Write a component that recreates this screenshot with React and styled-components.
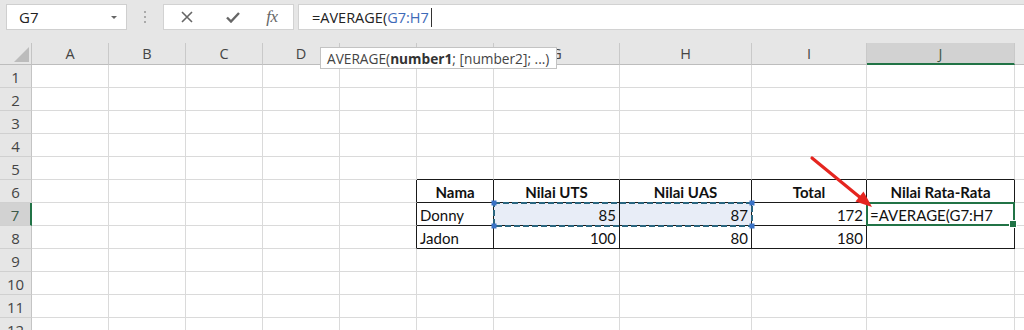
import styled, { createGlobalStyle } from "styled-components"

const GlobalStyle = createGlobalStyle`
  html, body {
    margin: 0;
    padding: 0;
    background: #ffffff;
    overflow: hidden;
  }
  * { box-sizing: border-box; }
`

const UI_FONT = `"Open Sans", "Noto Sans", sans-serif`
const CELL_FONT = `Lato, "Liberation Sans", sans-serif`

const LETTERS = ["A", "B", "C", "D", "E", "F", "G", "H", "I", "J", "K"]
const WIDTHS = [77, 77, 77, 77, 77, 77, 126, 132, 115, 148, 70]
const ROWS = [1, 2, 3, 4, 5, 6, 7, 8, 9, 10, 11, 12]

const DATA = {
  6: {
    5: { t: "Nama", a: "center", b: true },
    6: { t: "Nilai UTS", a: "center", b: true },
    7: { t: "Nilai UAS", a: "center", b: true },
    8: { t: "Total", a: "center", b: true },
    9: { t: "Nilai Rata-Rata", a: "center", b: true },
  },
  7: {
    5: { t: "Donny", a: "flex-start" },
    6: { t: "85", a: "flex-end" },
    7: { t: "87", a: "flex-end" },
    8: { t: "172", a: "flex-end" },
    9: { t: "=AVERAGE(G7:H7", a: "flex-start" },
  },
  8: {
    5: { t: "Jadon", a: "flex-start" },
    6: { t: "100", a: "flex-end" },
    7: { t: "80", a: "flex-end" },
    8: { t: "180", a: "flex-end" },
  },
}

const Page = styled.div`
  position: relative;
  width: 1024px;
  height: 330px;
  overflow: hidden;
  background: #e6e6e6;
`

const FormulaBar = styled.div`
  display: flex;
  align-items: flex-start;
  height: 43px;
  padding: 4px 0 0 6px;
`

const NameBox = styled.div`
  display: flex;
  align-items: center;
  justify-content: space-between;
  flex: none;
  width: 121px;
  height: 26px;
  padding: 0 9px 0 12px;
  background: #fff;
  border: 1px solid #cfcfcf;
  font-family: ${UI_FONT};
  font-size: 15px;
  color: #222;
`

const Caret = styled.span`
  width: 0;
  height: 0;
  border-left: 3px solid transparent;
  border-right: 3px solid transparent;
  border-top: 3px solid #666;
`

const Grip = styled.div`
  display: flex;
  flex-direction: column;
  align-items: center;
  justify-content: center;
  flex: none;
  gap: 3px;
  width: 36px;
  height: 26px;
`

const GripDot = styled.span`
  width: 2px;
  height: 2px;
  background: #aaa;
`

const EditBox = styled.div`
  display: flex;
  align-items: center;
  flex: none;
  width: 131px;
  height: 26px;
  background: #fff;
  border: 1px solid #d2d2d2;
  padding-left: 16px;
`

const IconSlot = styled.span`
  display: flex;
  align-items: center;
  justify-content: center;
  width: ${(p) => p.$w}px;
  margin-left: ${(p) => p.$gap || 0}px;
`

const Fx = styled.span`
  font-family: "Liberation Serif", "DejaVu Serif", serif;
  font-style: italic;
  font-size: 17px;
  color: #666;
  letter-spacing: -0.5px;
`

const FormulaInput = styled.div`
  display: flex;
  align-items: center;
  flex: 1;
  height: 26px;
  margin-left: 4px;
  padding-left: 13px;
  background: #fff;
  border: 1px solid #d2d2d2;
  border-right: none;
  font-family: ${UI_FONT};
  font-size: 14.5px;
  color: #222;
`

const Ref = styled.span`
  color: #3e6ab8;
`

const Cursor = styled.span`
  display: inline-block;
  width: 1px;
  height: 19px;
  margin-left: 2px;
  background: #333;
`

const Sheet = styled.div`
  position: relative;
  background: #fff;
`

const Row = styled.div`
  display: flex;
`

const Corner = styled.div`
  position: relative;
  flex: none;
  width: 32px;
  height: 22px;
  background: #e6e6e6;
  border-right: 1px solid #c4c4c4;
  border-bottom: 1px solid #bdbdbd;

  &::after {
    content: "";
    position: absolute;
    right: 2px;
    bottom: 2px;
    width: 15px;
    height: 15px;
    background: #bcbcbc;
    clip-path: polygon(100% 0, 100% 100%, 0 100%);
  }
`

const ColHeader = styled.div`
  display: flex;
  align-items: center;
  justify-content: center;
  flex: none;
  width: ${(p) => p.$w}px;
  height: 22px;
  background: ${(p) => (p.$active ? "#d2d2d2" : "#e6e6e6")};
  border-right: 1px solid #c9c9c9;
  border-bottom: ${(p) => (p.$active ? "2px solid #217346" : "1px solid #bdbdbd")};
  font-family: ${UI_FONT};
  font-size: 14.5px;
  color: ${(p) => (p.$active ? "#3d5a48" : "#444")};
`

const RowHeader = styled.div`
  display: flex;
  align-items: center;
  justify-content: center;
  flex: none;
  width: 32px;
  height: 23px;
  padding-top: 1px;
  background: ${(p) => (p.$active ? "#d2d2d2" : "#e6e6e6")};
  border-right: ${(p) => (p.$active ? "2px solid #217346" : "1px solid #c4c4c4")};
  border-bottom: 1px solid #d0d0d0;
  font-family: ${UI_FONT};
  font-size: 15px;
  color: ${(p) => (p.$active ? "#3d5a48" : "#444")};
`

const Cell = styled.div`
  display: flex;
  align-items: center;
  justify-content: ${(p) => p.$align || "flex-start"};
  flex: none;
  width: ${(p) => p.$w}px;
  height: 23px;
  padding: 2px 3px 0 3px;
  background: ${(p) => (p.$fill ? "#e8edf7" : "#fff")};
  border-right: 1px solid ${(p) => p.$right};
  border-bottom: 1px solid ${(p) => p.$bottom};
  font-family: ${CELL_FONT};
  font-size: 15px;
  font-weight: ${(p) => (p.$bold ? 700 : 400)};
  color: #111;
  white-space: nowrap;
`

const Tooltip = styled.div`
  position: absolute;
  left: 320px;
  top: 47px;
  width: 237px;
  height: 22px;
  display: flex;
  align-items: center;
  padding-left: 6px;
  background: #fff;
  border: 1px solid #c3c3c3;
  font-family: ${UI_FONT};
  font-size: 13.7px;
  color: #444;
  z-index: 3;

  b {
    color: #333;
  }
`

const Marquee = styled.svg`
  position: absolute;
  left: 491px;
  top: 157px;
  overflow: visible;
  z-index: 2;
`

const ActiveCell = styled.div`
  position: absolute;
  left: 866px;
  top: 159px;
  width: 149px;
  height: 24px;
  border: 2px solid #217346;
  z-index: 2;

  &::after {
    content: "";
    position: absolute;
    right: -4px;
    bottom: -4px;
    width: 6px;
    height: 6px;
    background: #217346;
    border: 1px solid #fff;
  }
`

const ArrowLayer = styled.svg`
  position: absolute;
  left: 0;
  top: 0;
  z-index: 4;
  pointer-events: none;
`

const lineColor = (dark) => (dark ? "#1a1a1a" : "#dadada")

function borders(r, c) {
  const inRows = r >= 6 && r <= 8
  const right = inRows && c >= 4 && c <= 9
  const bottom = c >= 5 && c <= 9 && r >= 5 && r <= 8
  return { right: lineColor(right), bottom: lineColor(bottom) }
}

const App = () => {
  return (
    <Page>
      <GlobalStyle />
      <FormulaBar>
        <NameBox>
          G7
          <Caret />
        </NameBox>
        <Grip>
          <GripDot />
          <GripDot />
          <GripDot />
        </Grip>
        <EditBox>
          <IconSlot $w={14}>
            <svg width="12" height="12" viewBox="0 0 12 12">
              <path d="M1 1 L11 11 M11 1 L1 11" stroke="#666" strokeWidth="1.6" fill="none" />
            </svg>
          </IconSlot>
          <IconSlot $w={14} $gap={32}>
            <svg width="14" height="11" viewBox="0 0 14 11">
              <path d="M1 5.5 L5 9.5 L13 1" stroke="#666" strokeWidth="2.4" fill="none" />
            </svg>
          </IconSlot>
          <IconSlot $w={20} $gap={22}>
            <Fx>fx</Fx>
          </IconSlot>
        </EditBox>
        <FormulaInput>
          =AVERAGE(<Ref>G7:H7</Ref>
          <Cursor />
        </FormulaInput>
      </FormulaBar>

      <Sheet>
        <Row>
          <Corner />
          {LETTERS.map((l, i) => (
            <ColHeader key={l} $w={WIDTHS[i]} $active={l === "J"}>
              {l}
            </ColHeader>
          ))}
        </Row>
        {ROWS.map((r) => (
          <Row key={r}>
            <RowHeader $active={r === 7}>{r}</RowHeader>
            {WIDTHS.map((w, c) => {
              const d = (DATA[r] && DATA[r][c]) || {}
              const b = borders(r, c)
              return (
                <Cell
                  key={c}
                  $w={w}
                  $right={b.right}
                  $bottom={b.bottom}
                  $align={d.a}
                  $bold={d.b}
                  $fill={r === 7 && (c === 6 || c === 7)}
                >
                  {d.t}
                </Cell>
              )
            })}
          </Row>
        ))}

        <Marquee width="264" height="28" viewBox="0 0 264 28">
          <rect
            x="3"
            y="3"
            width="258"
            height="23"
            fill="none"
            stroke="#2a6680"
            strokeWidth="2"
            strokeDasharray="6 3"
          />
          <rect x="0.5" y="0.5" width="5" height="5" fill="#3a72c6" />
          <rect x="0.5" y="23.5" width="5" height="5" fill="#3a72c6" />
          <rect x="258.5" y="0.5" width="5" height="5" fill="#3a72c6" />
          <rect x="258.5" y="23.5" width="5" height="5" fill="#3a72c6" />
        </Marquee>
        <ActiveCell />
      </Sheet>

      <Tooltip>
        AVERAGE(<b>number1</b>; [number2]; ...)
      </Tooltip>

      <ArrowLayer width="1024" height="330" viewBox="0 0 1024 330">
        <line x1="812" y1="158" x2="862" y2="199" stroke="#e5251f" strokeWidth="3.2" strokeLinecap="round" />
        <polygon points="872,207 855.5,201.5 863.5,191.5" fill="#e5251f" />
      </ArrowLayer>
    </Page>
  )
}

export default App
